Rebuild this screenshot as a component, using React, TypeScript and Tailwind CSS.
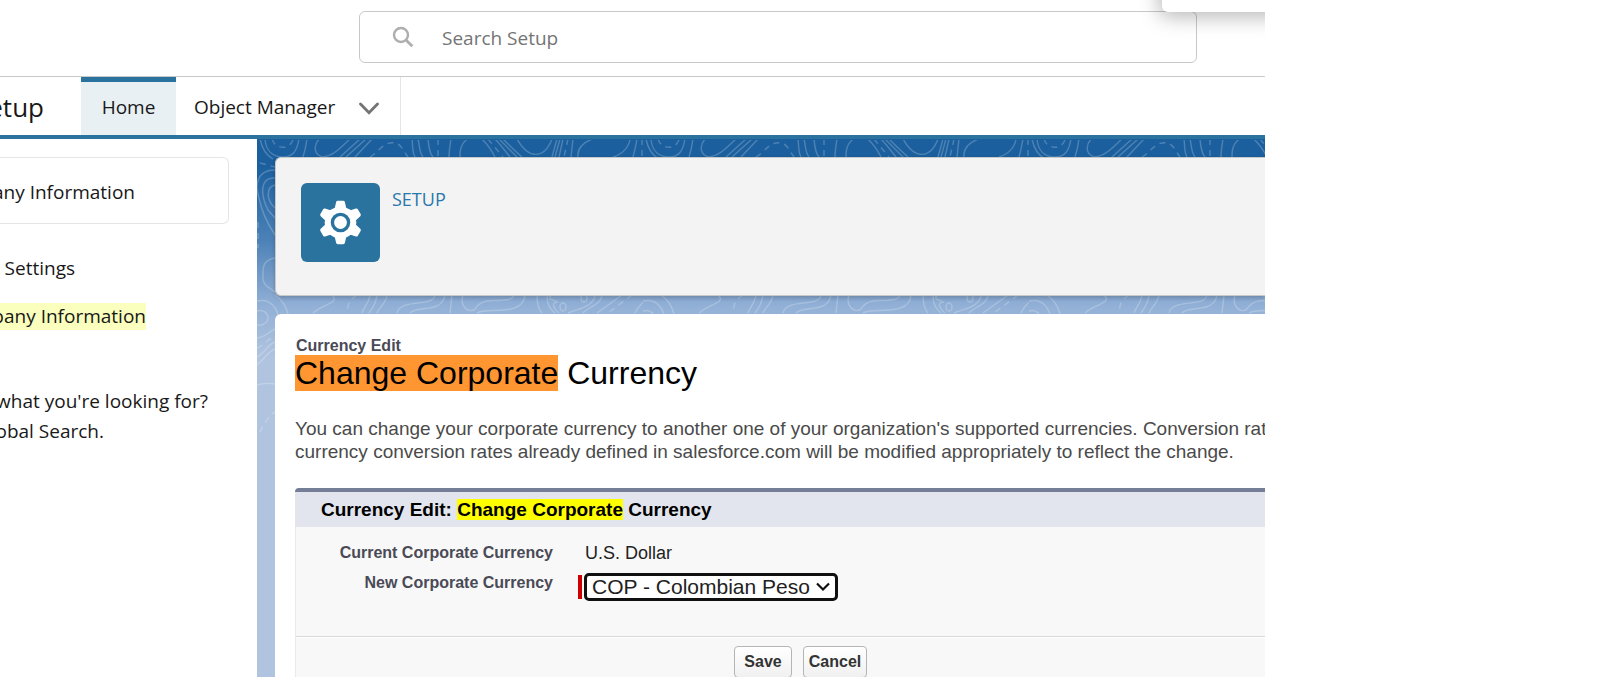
import React from "react";

const solidLines = [
  "M3 0C5 10 9 16 16 20M8 0C9 12 16 18 26 18S40 12 42 0M50 0C49 7 48 12 46 18",
  "M62 0C56 7 57 16 66 18C77 17 85 7 93 0M83 18L103 0M89 18L109 0M98 18L115 0",
  "M155 0C156 7 155 13 158 18M161 0C163 8 162 13 166 18M171 0C172 8 172 14 176 18M194 0C193 6 192 12 192 18M210 0C203 6 203 12 203 18",
  "M225 0C230 5 234 10 238 18M238 0C244 6 248 12 253 18M242 0L260 18M246 0C252 6 258 12 265 18M260 0C271 20 287 21 295 0",
  "M300 0L295 18M303 0L298 18M306 0L302 18M316 0L314 18M335 0C323 5 320 11 321 18M373 0C372 9 364 16 356 18M380 0C379 6 378 11 376 18",
  "M18 31C-1 31 -2 47 2 59C5 74 10 84 18 96M18 39C3 38 3 55 11 71L18 79M18 46C9 48 9 61 18 69",
  "M18 119C5 121 6 130 6 138C5 146 13 149 18 153M0 162C14 159 22 170 22 184M18 156C24 160 29 167 31 175",
  "M0 172C6 170 11 174 11 179S5 187 0 186M0 199C9 198 13 192 18 190M0 218C7 215 11 205 18 203M0 226C8 220 11 212 18 210M0 246C6 244 12 244 18 245",
  "M75 156C84 164 66 165 56 174M113 156C112 164 107 168 105 174M120 156C119 164 116 169 112 174M130 156C129 165 122 168 120 174",
  "M178 156C176 169 143 159 140 174M188 156C185 175 160 166 153 174M195 156L193 174M206 156C202 168 213 175 218 170C225 158 239 163 247 161C253 161 256 159 257 156",
  "M220 174C229 168 267 178 268 156M280 156C280 164 281 170 285 174M290 156C290 165 292 170 298 174M294 156C290 162 297 160 300 163C293 164 298 171 302 174M338 156C337 168 320 170 311 174M345 156C344 166 331 168 326 174M365 156L340 174M378 174C382 166 386 164 386 163",
  "M303 168A3 4 0 1 0 309 168A3 4 0 1 0 303 168M324 159A3 4 0 1 0 330 159A3 4 0 1 0 324 159",
];

const dashedLines = [
  "M15 0C18 11 34 11 36 0M113 18C121 13 126 5 133 4C144 2 146 12 151 18M181 0V18M231 0L246 18M311 0L307 18M385 0V18",
  "M3 24L18 28M1 83V109M100 156C91 162 90 167 91 174M375 156L351 174M0 209C8 206 11 200 18 197M3 293C7 284 12 277 18 273",
];

function Topography() {
  return (
    <svg className="absolute inset-0 h-full w-full" aria-hidden="true">
      <defs>
        <linearGradient id="sky" gradientUnits="userSpaceOnUse" x1="0" y1="0" x2="0" y2="220">
          <stop offset="0" stopColor="#1b5f9e" />
          <stop offset="0.12" stopColor="#1b5f9e" />
          <stop offset="0.45" stopColor="#4a80b6" />
          <stop offset="0.76" stopColor="#92b0d6" />
          <stop offset="1" stopColor="#b0c4df" />
        </linearGradient>
        <pattern id="contours" width="386" height="320" patternUnits="userSpaceOnUse">
          <g fill="none" stroke="#fff" strokeOpacity="0.22" strokeWidth="1.4">
            {solidLines.map((d) => (
              <path key={d} d={d} />
            ))}
            {dashedLines.map((d) => (
              <path key={d} d={d} strokeDasharray="6 5" />
            ))}
          </g>
        </pattern>
      </defs>
      <rect width="100%" height="100%" fill="url(#sky)" />
      <rect y="1" width="100%" height="300" fill="url(#contours)" />
    </svg>
  );
}

function Gear() {
  return (
    <svg viewBox="0 0 80 80" className="h-full w-full" aria-hidden="true">
      <g transform="translate(40 40)">
        <g fill="#fff" stroke="#fff" strokeWidth="3.4" strokeLinejoin="round">
          {[0, 60, 120, 180, 240, 300].map((a) => (
            <path key={a} d="M-2.8-20.2H2.8L4.2-14L7-11H-7L-4.2-14Z" transform={`rotate(${a})`} />
          ))}
        </g>
        <circle r="16" fill="#fff" />
        <circle r="8.2" fill="#fff" stroke="#2a739e" strokeWidth="3.4" />
      </g>
    </svg>
  );
}

export default function App() {
  return (
    <div className="h-screen overflow-hidden bg-white pr-[358px] pb-[11px] font-['Open_Sans',sans-serif] text-[19px] text-[#181818]">
      <div className="relative flex h-full flex-col overflow-hidden">
        <header className="flex shrink-0 border-b border-[#c9c9c9] pt-[11px] pr-[68px] pb-[13px] pl-[359px]">
          <label className="flex h-[52px] flex-1 items-center gap-7 rounded-md border border-[#c9c9c9] pl-8">
            <svg viewBox="0 0 22 22" className="h-[22px] w-[22px] shrink-0" fill="none" stroke="#aeaeae" aria-hidden="true">
              <circle cx="9" cy="9" r="7" strokeWidth="2.4" />
              <path d="M14 14L20.3 20.3" strokeWidth="2.8" />
            </svg>
            <input
              aria-label="Search Setup"
              placeholder="Search Setup"
              className="min-w-0 flex-1 bg-transparent pt-[2px] outline-none placeholder:text-[#747474]"
            />
          </label>
        </header>
        <div className="absolute -top-12 -right-4 h-[60px] w-[119px] rounded-md bg-white shadow-[0_2px_20px_3px_rgba(0,0,0,0.28)]" />

        <nav className="flex h-[62px] shrink-0 border-b-4 border-[#2a739e]">
          <div className="flex w-[81px] items-center overflow-hidden pt-[2px]">
            <span className="flex w-11 shrink-0 justify-end text-[26px]">Setup</span>
          </div>
          <a
            href="#home"
            className="flex w-[95px] items-center justify-center border-t-[5px] border-[#2a739e] bg-[#e8f0f4] pb-[2px]"
          >
            Home
          </a>
          <a href="#objects" className="flex items-center gap-6 border-r border-[#e5e5e5] pt-[2px] pr-[21px] pl-[18px]">
            Object Manager
            <svg viewBox="0 0 20 14" className="mt-1 h-[14px] w-5" fill="none" stroke="#747474" strokeWidth="2.8" aria-hidden="true">
              <path d="M1.5 2L10 10.8L18.5 2" strokeLinecap="round" />
            </svg>
          </a>
        </nav>

        <div className="flex min-h-0 flex-1">
          <aside className="w-[257px] shrink-0 overflow-hidden pt-[18px]">
            <div className="mr-7 flex h-[67px] items-center rounded-r-md border border-l-0 border-[#e5e5e5] pt-1">
              <span className="flex w-[135px] shrink-0 justify-end whitespace-nowrap">Company Information</span>
            </div>
            <div className="flex w-[75px] justify-end pt-[29px] leading-[30px]">
              <a href="#settings">Settings</a>
            </div>
            <div className="flex w-[146px] justify-end pt-5">
              <a href="#company" className="bg-[#faffbd] leading-[27px] whitespace-nowrap">
                Company Information
              </a>
            </div>
            <p className="flex w-[208px] flex-col pt-14 leading-[30px] whitespace-nowrap">
              <span className="flex justify-end">what you&apos;re looking for?</span>
              <span className="flex w-[104px] justify-end">Global Search.</span>
            </p>
          </aside>

          <main className="relative min-w-0 flex-1 overflow-hidden">
            <Topography />
            <div className="relative flex h-full flex-col pt-[18px] pl-[18px]">
              <section className="flex h-[139px] shrink-0 gap-3 rounded-l-md border border-r-0 border-[#c9c9c9] bg-[#f3f3f3] pt-[25px] pl-[25px] shadow-[0_2px_4px_rgba(0,0,0,0.2)]">
                <div className="h-[79px] w-[79px] rounded-md bg-[#2a739e]">
                  <Gear />
                </div>
                <h1 className="pt-[3px] text-[18px] leading-[26px] text-[#2a78ab]">SETUP</h1>
              </section>

              <section className="mt-[18px] flex min-h-0 flex-1 flex-col overflow-hidden rounded-tl-md bg-white pt-[23px] pl-5 font-['Liberation_Sans',Arial,sans-serif]">
                <h2>
                  <span className="block pl-px text-[16px] leading-[18px] font-bold text-[#4a4a56]">Currency Edit</span>
                  <span className="block text-[32px] leading-9 whitespace-nowrap text-black">
                    <mark className="bg-[#ff9632] text-black">Change Corporate</mark> Currency
                  </span>
                </h2>
                <p className="mt-[26px] text-[19px] leading-[23px] whitespace-nowrap text-[#4a4a4a]">
                  You can change your corporate currency to another one of your organization&apos;s supported currencies. Conversion rates
                  <br />
                  currency conversion rates already defined in salesforce.com will be modified appropriately to reflect the change.
                </p>

                <form
                  className="mt-[25px] flex-1 rounded-tl-[4px] border-t-4 border-[#747e96] bg-[#f8f8f8]"
                  onSubmit={(e) => e.preventDefault()}
                >
                  <h3 className="border-l border-[#e5e5ea] bg-[#e2e5ee] pl-[25px] text-[19px] leading-[35px] font-bold text-black">
                    Currency Edit: <mark className="bg-[#ffff00] text-black">Change Corporate</mark> Currency
                  </h3>
                  <div className="h-[110px] border-b border-l border-[#d9d9d9] border-l-[#eaeaea] pt-[14px]">
                    <dl className="flex leading-6">
                      <dt className="w-[257px] text-right text-[16px] font-bold text-[#4a4a56]">Current Corporate Currency</dt>
                      <dd className="pl-8 text-[18px] text-[#222]">U.S. Dollar</dd>
                    </dl>
                    <div className="mt-[6px] flex">
                      <label htmlFor="currency" className="w-[257px] text-right text-[16px] leading-6 font-bold text-[#4a4a56]">
                        New Corporate Currency
                      </label>
                      <div className="relative mt-[2px] ml-[25px] flex items-center">
                        <span className="mr-[2px] h-6 w-1 bg-[#c00]" />
                        <select
                          id="currency"
                          className="h-7 w-[254px] appearance-none rounded-[5px] border-[3px] border-[#101010] bg-white pl-[5px] text-[21px] leading-[22px] text-[#222] outline-none"
                        >
                          <option>COP - Colombian Peso</option>
                        </select>
                        <svg
                          viewBox="0 0 14 10"
                          className="pointer-events-none absolute right-2 h-[10px] w-[14px]"
                          fill="none"
                          stroke="#101010"
                          strokeWidth="2.2"
                          aria-hidden="true"
                        >
                          <path d="M1 1.5L7 7.5L13 1.5" />
                        </svg>
                      </div>
                    </div>
                  </div>
                  <div className="flex gap-[11px] border-t border-l border-white border-l-[#eaeaea] pt-[8px] pl-[438px] text-[16px] font-bold text-[#333]">
                    <button
                      type="submit"
                      className="h-8 w-[58px] rounded-[4px] border border-[#b5b5b5] bg-linear-to-b from-white to-[#f0f0f0]"
                    >
                      Save
                    </button>
                    <button
                      type="button"
                      className="h-8 w-16 rounded-[4px] border border-[#b5b5b5] bg-linear-to-b from-white to-[#f0f0f0]"
                    >
                      Cancel
                    </button>
                  </div>
                </form>
              </section>
            </div>
          </main>
        </div>
      </div>
    </div>
  );
}
